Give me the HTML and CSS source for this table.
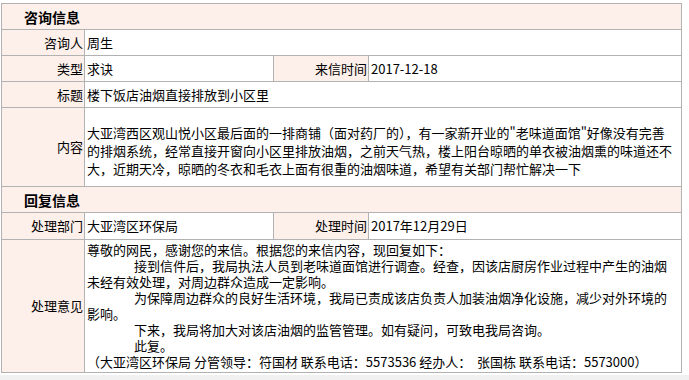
FILE: index.html
```html
<!DOCTYPE html>
<html lang="zh-CN">
<head>
<meta charset="utf-8">
<title>咨询信息</title>
<link rel="stylesheet" href="styles.css">
</head>
<body>
<div class="page">
<table class="info">
  <colgroup>
    <col class="c1"><col class="c2"><col class="c3"><col class="c4">
  </colgroup>
  <tr class="row"><td class="head" colspan="4">咨询信息</td></tr>
  <tr class="row"><td class="lab">咨询人</td><td class="val" colspan="3">周生</td></tr>
  <tr class="row"><td class="lab">类型</td><td class="val">求诀</td><td class="lab">来信时间</td><td class="val">2017-12-18</td></tr>
  <tr class="row"><td class="lab">标题</td><td class="val" colspan="3">楼下饭店油烟直接排放到小区里</td></tr>
  <tr class="row-content"><td class="lab">内容</td><td class="val content" colspan="3">大亚湾西区观山悦小区最后面的一排商铺（面对药厂的），有一家新开业的"老味道面馆"好像没有完善的排烟系统，经常直接开窗向小区里排放油烟，之前天气热，楼上阳台晾晒的单衣被油烟熏的味道还不大，近期天冷，晾晒的冬衣和毛衣上面有很重的油烟味道，希望有关部门帮忙解决一下</td></tr>
  <tr class="row"><td class="head" colspan="4">回复信息</td></tr>
  <tr class="row row-dept"><td class="lab">处理部门</td><td class="val">大亚湾区环保局</td><td class="lab">处理时间</td><td class="val">2017年12月29日</td></tr>
  <tr class="row-reply"><td class="lab">处理意见</td><td class="val reply" colspan="3">
    <div>尊敬的网民，感谢您的来信。根据您的来信内容，现回复如下：</div>
    <div class="ind">接到信件后，我局执法人员到老味道面馆进行调查。经查，因该店厨房作业过程中产生的油烟未经有效处理，对周边群众造成一定影响。</div>
    <div class="ind">为保障周边群众的良好生活环境，我局已责成该店负责人加装油烟净化设施，减少对外环境的影响。</div>
    <div class="ind">下来，我局将加大对该店油烟的监管管理。如有疑问，可致电我局咨询。</div>
    <div class="ind">此复。</div>
    <div>（大亚湾区环保局 分管领导：符国材 联系电话：5573536 经办人：&nbsp;&nbsp;张国栋 联系电话：5573000）</div>
  </td></tr>
</table>
</div>
<div class="foot"></div>
</body>
</html>
```

FILE: styles.css
```css
html, body {
  margin: 0;
  padding: 0;
  background: #ffffff;
}
body {
  font-family: "Noto Sans CJK SC", "Liberation Sans", sans-serif;
  font-size: 13px;
  color: #000;
}
.page {
  padding: 3px 0 2px 1px;
  background: #ffffff;
}
.foot {
  height: 10px;
  background: #f1f1f1;
}
.info {
  border-collapse: collapse;
  table-layout: fixed;
  width: 680px;
}
.c1 { width: 83px; }
.c2 { width: 189px; }
.c3 { width: 95px; }
.c4 { width: 313px; }
.info td {
  border: 1px solid #b2b2b2;
  padding: 0 2px;
  line-height: 16px;
  vertical-align: middle;
}
.row td {
  height: 25px;
  padding-top: 0;
  padding-bottom: 0;
}
.row-dept td {
  height: 26px;
}
.head {
  background: #fdefea;
  font-size: 14px;
  font-weight: bold;
  padding-left: 22px !important;
}
.info td.lab {
  background: #fdefea;
  text-align: right;
  padding-right: 1px;
}
.info td.val {
  padding-left: 2px;
}
.info td.content {
  height: 79px;
  line-height: 18px;
  padding-top: 8px;
  padding-right: 7px;
  padding-bottom: 0;
  box-sizing: border-box;
}
.info td.reply {
  line-height: 16px;
  padding-top: 2px;
  padding-bottom: 2px;
}
.reply .ind {
  text-indent: 47px;
}
```
